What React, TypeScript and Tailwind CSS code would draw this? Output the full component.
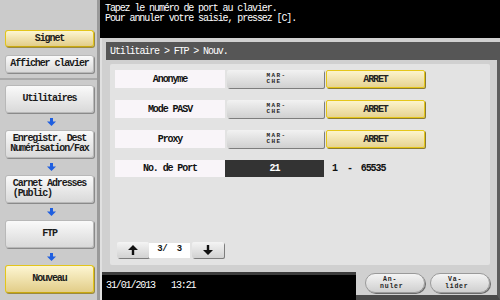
import type { ReactNode } from "react";

const FONT = "font-['Liberation_Mono',monospace]";

function BlueArrow() {
  return (
    <div className="flex h-[17px] items-center justify-center">
      <svg width="9" height="8" viewBox="0 0 9 8">
        <rect x="3" y="0" width="3" height="4" fill="#1f5fe0" />
        <polygon points="0,3.5 9,3.5 4.5,8" fill="#1f5fe0" />
      </svg>
    </div>
  );
}

function SideButton({ children, active = false, h = "h-[28px]" }: { children: ReactNode; active?: boolean; h?: string }) {
  return (
    <div
      className={`${h} w-[89px] flex items-center justify-center text-center rounded-[3px] border leading-[10px] font-bold text-[10px] tracking-[-1.1px] text-[#1a1a1a] ${
        active
          ? "border-[#e3c51a] border-b-[#c9a910] bg-gradient-to-b from-[#fdf6d2] to-[#e2cd88] shadow-[1px_1px_0_#9b8a40]"
          : "border-[#b8b8b8] bg-gradient-to-b from-[#fafafa] to-[#d9d9d9] shadow-[1px_1px_0_#8a8a8a]"
      }`}
    >
      {children}
    </div>
  );
}

function Row({ label }: { label: string }) {
  return (
    <div className="flex h-[18px] mb-[12px]">
      <div className="w-[110px] bg-[#f9f5f9] flex items-center justify-center font-bold text-[10px] tracking-[-1.1px]">{label}</div>
      <div className="ml-[2px] w-[97px] rounded-[2px] bg-gradient-to-b from-[#f2f2f2] to-[#d0d0d0] shadow-[1px_1px_0_#7d7d7d] flex flex-col items-center justify-center text-[6px] leading-[6px] tracking-[1.4px] font-bold text-[#1e1e1e]">
        <span className="ml-[2px]">MAR-</span>
        <span className="mr-[3px]">CHE</span>
      </div>
      <div className="ml-[2px] w-[99px] rounded-[2px] border border-[#e5c619] bg-gradient-to-b from-[#fcf4cc] to-[#e6d392] shadow-[1px_1px_0_#8a7a30] flex items-center justify-center font-bold text-[10px] tracking-[-1.1px] text-[#222]">
        ARRET
      </div>
    </div>
  );
}

function PageArrow({ up }: { up?: boolean }) {
  return (
    <div className="w-[32px] h-[16px] rounded-[2px] bg-gradient-to-b from-[#f4f4f4] to-[#d2d2d2] shadow-[1px_1px_0_#7d7d7d] flex items-center justify-center">
      <svg width="10" height="10" viewBox="0 0 10 10" className={up ? "" : "rotate-180"}>
        <rect x="3.8" y="3" width="2.4" height="7" fill="#111" />
        <polygon points="0,5 5,0 10,5 8,5 5,2.5 2,5" fill="#111" />
        <polygon points="1,5 5,1 9,5" fill="#111" />
      </svg>
    </div>
  );
}

function PillButton({ top, bottom }: { top: string; bottom: string }) {
  return (
    <div className="w-[60px] h-[20px] rounded-full border border-[#9a9a9a] bg-gradient-to-b from-[#f4f4f4] to-[#cfcfcf] shadow-[1px_1px_0_#6b6b6b] flex flex-col items-center justify-center text-[6.5px] leading-[7px] tracking-[0.8px] font-bold text-[#222]">
      <span className="self-start ml-[17px]">{top}</span>
      <span className="self-start ml-[14px]">{bottom}</span>
    </div>
  );
}

export default function App() {
  return (
    <div className={`w-[500px] h-[300px] flex overflow-hidden ${FONT} text-[#111]`}>
      {/* Sidebar */}
      <div className="w-[100px] h-full bg-[#cbcbcb] border-r-[3px] border-r-[#9a9a9a] flex flex-col">
        <div className="h-[80px] pt-[30px] pl-[5px] border-b-[2px] border-b-[#a9a9a9] flex flex-col gap-[8px]">
          <SideButton active h="h-[17px]">Signet</SideButton>
          <SideButton h="h-[18px]">Afficher clavier</SideButton>
        </div>
        <div className="pt-[5px] pl-[5px] flex flex-col">
          <SideButton>Utilitaires</SideButton>
          <BlueArrow />
          <SideButton>Enregistr. Dest<br />Numérisation/Fax</SideButton>
          <BlueArrow />
          <SideButton>
            <span className="text-left">Carnet Adresses<br />(Public)</span>
          </SideButton>
          <BlueArrow />
          <SideButton>FTP</SideButton>
          <BlueArrow />
          <SideButton active>Nouveau</SideButton>
        </div>
      </div>

      {/* Right column */}
      <div className="flex-1 flex flex-col">
        <div className="h-[38px] bg-black text-white text-[10px] leading-[10px] tracking-[-1.1px] pl-[5px] pt-[4px]">
          <div>Tapez le numéro de port au clavier.</div>
          <div>Pour annuler votre saisie, pressez [C].</div>
        </div>

        <div className="flex-1 flex flex-col bg-[#d0d0d0] border-l-[2px] border-l-[#e0e0e0]">
          <div className="pt-[4px] pl-[4px]">
            <div className="h-[18px] bg-[#565656] text-white text-[10px] tracking-[-1.1px] flex items-center pl-[4px]">
              Utilitaire &gt; FTP &gt; Nouv.
            </div>
          </div>

          <div className="pt-[4px] pl-[8px] pr-[7px] border-r-[3px] border-r-[#5c5c5c]">
            <div className="h-[201px] bg-[#e3e3e3] rounded-[2px] pt-[6px] pl-[5px] flex flex-col">
              <Row label="Anonyme" />
              <Row label="Mode PASV" />
              <Row label="Proxy" />
              <div className="flex h-[17px] items-center">
                <div className="w-[110px] h-full bg-[#f9f5f9] flex items-center justify-center font-bold text-[10px] tracking-[-1.1px]">No. de Port</div>
                <div className="w-[99px] h-full bg-[#333333] text-white flex items-center justify-center font-bold text-[10px] tracking-[-1.1px]">21</div>
                <div className="ml-[8px] text-[10px] font-bold tracking-[-1.1px] flex">
                  <span>1</span>
                  <span className="ml-[10px]">-</span>
                  <span className="ml-[9px]">65535</span>
                </div>
              </div>

              <div className="mt-auto mb-[7px] ml-[2px] flex items-center">
                <PageArrow up />
                <div className="w-[41px] h-[15px] bg-white flex items-center justify-center text-[9px] font-bold tracking-[-0.5px]">
                  3/&nbsp;&nbsp;3
                </div>
                <div className="ml-[2px]">
                  <PageArrow />
                </div>
              </div>
            </div>
          </div>

          <div className="flex-1 flex">
            <div className="w-[254px] flex flex-col">
              <div className="h-[7px]" />
              <div className="flex-1 bg-black border-t-[3px] border-t-[#3c3c3c] text-white text-[10px] tracking-[-1.1px] pl-[4px] pt-[3px] flex">
                <span>31/01/2013</span>
                <span className="ml-[16px]">13:21</span>
              </div>
            </div>
            <div className="flex-1 border-r-[3px] border-r-[#5c5c5c] border-b-[5px] border-b-[#4a4a4a] pt-[8px] pl-[9px] flex gap-[5px]">
              <PillButton top="An-" bottom="nuler" />
              <PillButton top="Va-" bottom="lider" />
            </div>
          </div>
        </div>
      </div>
    </div>
  );
}
